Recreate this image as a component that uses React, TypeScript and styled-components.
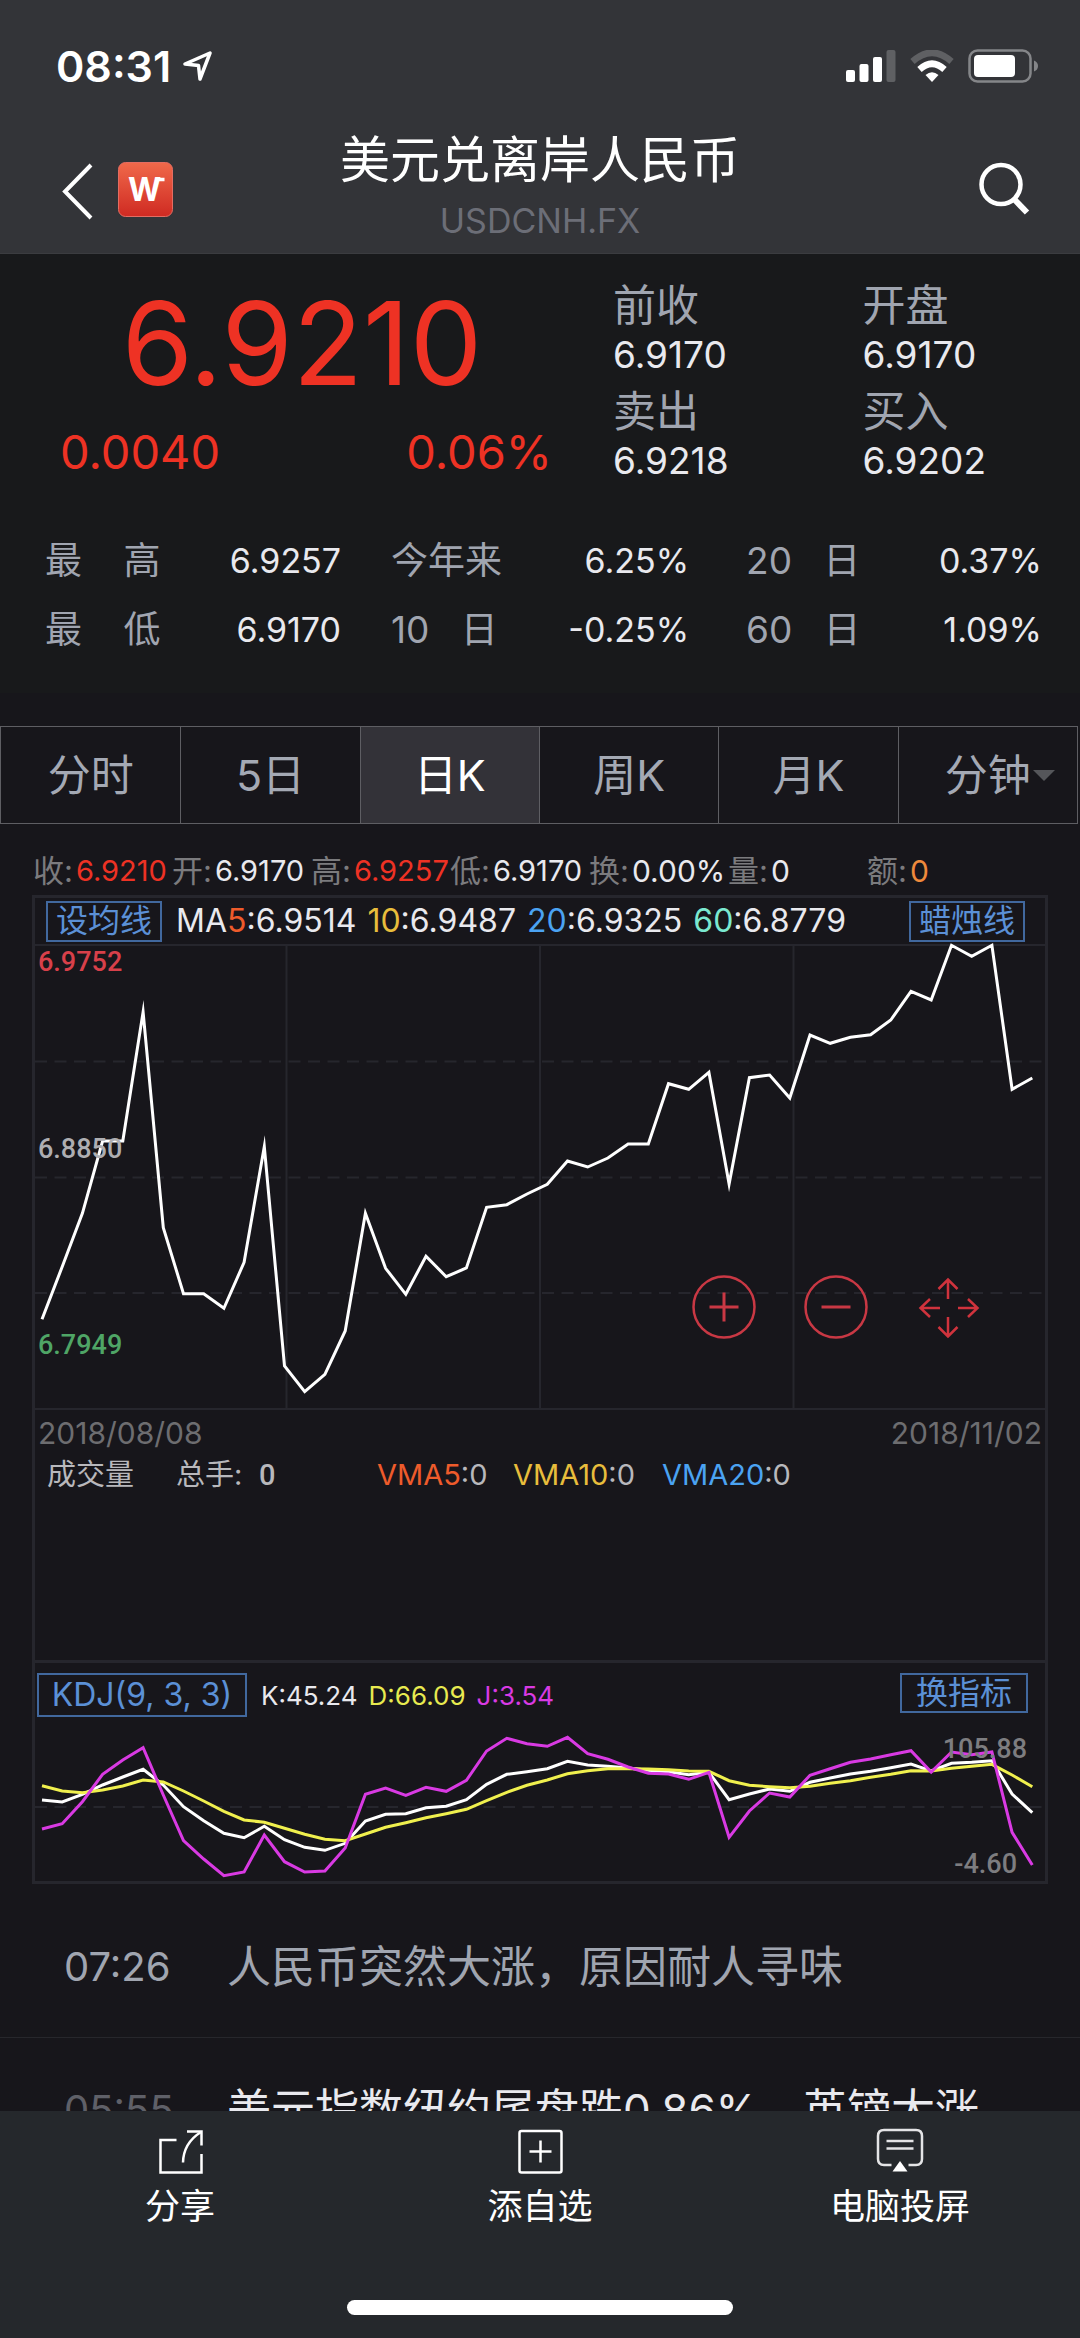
import React from "react";
import styled, { createGlobalStyle } from "styled-components";

const GlobalStyle = createGlobalStyle`
  *, *::before, *::after { box-sizing: border-box; }
  body {
    margin: 0;
    background: #17161b;
    font-family: Inter, "Noto Sans CJK SC", sans-serif;
    color: #e9e9ee;
  }
  h1, p, dl, dd, dt, ul { margin: 0; padding: 0; font-weight: 400; }
  ul { list-style: none; }
  button { margin: 0; padding: 0; border: 0; background: none; font: inherit; color: inherit; cursor: pointer; }
  a { color: inherit; text-decoration: none; }
  svg { display: block; flex: none; }
`;

const BLUE = "#5b90d6";
const RED = "#ee3224";
const LINE = "#26262d";

/* ---------- shell ---------- */

const Screen = styled.div`
  display: flex;
  flex-direction: column;
  height: 100vh;
  overflow: hidden;
`;

const Content = styled.main`
  flex: 1;
  min-height: 0;
  overflow: hidden;
`;

/* ---------- header ---------- */

const Header = styled.header`
  background: #333438;
  border-bottom: 1px solid #3b3c40;
`;

const StatusBar = styled.div`
  display: flex;
  align-items: center;
  justify-content: space-between;
  height: 110px;
  padding: 22px 40px 0 56px;
`;

const Clock = styled.div`
  display: flex;
  align-items: center;
  gap: 12px;
  font-size: 43px;
  font-weight: 600;
  line-height: 52px;
  color: #fff;
`;

const StatusIcons = styled.div`
  display: flex;
  align-items: center;
  gap: 14px;
`;

const TitleBar = styled.div`
  display: grid;
  grid-template-columns: 1fr auto 1fr;
  align-items: center;
  height: 143px;
  padding: 16px 48px 0;
`;

const HeaderLeft = styled.div`
  display: flex;
  align-items: center;
  gap: 22px;
  padding-left: 12px;
`;

const HeaderRight = styled.div`
  display: flex;
  justify-content: flex-end;
`;

const Titles = styled.div`
  text-align: center;
`;

const Title = styled.h1`
  font-size: 50px;
  line-height: 62px;
  color: #fff;
`;

const Symbol = styled.p`
  font-size: 34px;
  line-height: 60px;
  color: #6c6e77;
`;

/* ---------- quote ---------- */

const Quote = styled.section`
  height: 439px;
  padding-top: 24px;
  background: #18191b;
`;

const QuoteTop = styled.div`
  display: grid;
  grid-template-columns: 552fr 528fr;
`;

const PriceBlock = styled.div`
  padding-left: 60px;
  color: ${RED};
`;

const Price = styled.p`
  padding-right: 8px;
  font-size: 115px;
  line-height: 132px;
  text-align: center;
`;

const Changes = styled.div`
  display: flex;
  justify-content: space-between;
  margin-top: 12px;
  font-size: 47px;
  line-height: 60px;
`;

const SideGrid = styled.dl`
  display: grid;
  grid-template-columns: 1fr 1fr;
  column-gap: 32px;
  row-gap: 6px;
  padding-left: 61px;
`;

const SideLabel = styled.dt`
  font-size: 43px;
  line-height: 54px;
  color: #a0a5b0;
`;

const SideValue = styled.dd`
  font-size: 37px;
  line-height: 46px;
`;

const Stats = styled.dl`
  display: grid;
  grid-template-columns: 345fr 354fr 295fr;
  row-gap: 21px;
  margin-top: 53px;
  padding: 0 38px 0 45px;
`;

const Stat = styled.div<{ $gap: number }>`
  display: flex;
  justify-content: space-between;
  align-items: center;
  padding-right: ${(p) => p.$gap}px;
  line-height: 48px;
`;

const StatLabel = styled.dt`
  font-size: 37px;
  color: #a0a5b0;
  white-space: pre;
`;

const StatValue = styled.dd`
  font-size: 34px;
`;

/* ---------- period tabs ---------- */

const Tabs = styled.div`
  display: grid;
  grid-template-columns: repeat(6, 1fr);
  margin: 33px 2px 0 0;
  border: 1px solid #5e5e63;
`;

const Tab = styled.button<{ $active: boolean }>`
  position: relative;
  height: 96px;
  font-size: 43px;
  line-height: 56px;
  color: ${(p) => (p.$active ? "#fff" : "#a4a9b4")};
  background: ${(p) => (p.$active ? "#333238" : "transparent")};

  & + & {
    border-left: 1px solid #5e5e63;
  }
`;

const Caret = styled.span`
  position: absolute;
  right: 22px;
  top: 43px;
  border: 11px solid transparent;
  border-top-color: #55565a;
  border-bottom: 0;
`;

/* ---------- chart ---------- */

const Ohlc = styled.dl`
  display: grid;
  grid-template-columns: repeat(7, 139fr) 74fr;
  padding: 23px 0 0 33px;
  line-height: 48px;
`;

const OhlcItem = styled.div`
  display: flex;
  align-items: center;
  gap: 3px;
  white-space: nowrap;
`;

const OhlcLabel = styled.dt`
  font-size: 31px;
  color: #7b7b7e;
`;

const OhlcValue = styled.dd<{ $color: string; $size: number }>`
  font-size: ${(p) => p.$size}px;
  color: ${(p) => p.$color};
`;

const ChartBox = styled.section`
  margin: 0 32px;
  border: 3px solid ${LINE};
`;

const MaRow = styled.div`
  display: flex;
  align-items: center;
  height: 48px;
  padding: 0 20px 0 11px;
  border-bottom: 2px solid ${LINE};
`;

const Outline = styled.button<{ $width: number; $height: number }>`
  width: ${(p) => p.$width}px;
  height: ${(p) => p.$height}px;
  border: 2px solid #41689e;
  font-size: 32px;
  line-height: 36px;
  color: ${BLUE};
  white-space: nowrap;
`;

const MaList = styled.p`
  flex: 1;
  display: flex;
  gap: 11px;
  padding-left: 14px;
  font-size: 32px;
  line-height: 44px;
`;

const Tint = styled.span<{ $color: string }>`
  color: ${(p) => p.$color};
`;

const Plot = styled.div`
  position: relative;
  height: 464px;
  border-bottom: 2px solid ${LINE};
`;

const Canvas = styled.svg`
  width: 100%;
  height: 100%;
  overflow: visible;
`;

const AxisLabel = styled.span<{ $top: number; $color: string }>`
  position: absolute;
  left: 3px;
  top: ${(p) => p.$top}px;
  font-family: Roboto, sans-serif;
  font-size: 27px;
  font-weight: 500;
  line-height: 32px;
  color: ${(p) => p.$color};
`;

const PlotTools = styled.div`
  position: absolute;
  right: 65px;
  top: 329px;
  display: flex;
  gap: 48px;
`;

const Volume = styled.div`
  height: 253px;
  border-bottom: 3px solid ${LINE};
`;

const Dates = styled.div`
  display: flex;
  justify-content: space-between;
  padding: 0 3px;
  font-size: 30px;
  line-height: 46px;
  color: #6d6d70;
`;

const VolumeRow = styled.div`
  display: grid;
  grid-template-columns: 129px 83px 118px 136px 149px 1fr;
  padding-left: 12px;
  font-size: 29px;
  line-height: 38px;
  color: #b8b8bc;
  white-space: nowrap;
`;

const VolumeCount = styled.span`
  font-family: Roboto, sans-serif;
  font-weight: 500;
`;

const Kdj = styled.div`
  position: relative;
  height: 218px;
`;

const KdjHead = styled.div`
  position: absolute;
  left: 2px;
  right: 17px;
  top: 10px;
  display: flex;
  align-items: flex-start;
`;

const KdjValues = styled.p`
  flex: 1;
  display: flex;
  gap: 11px;
  padding-left: 14px;
  font-size: 26px;
  line-height: 46px;
`;

const KdjAxis = styled.span<{ $top: number; $right: number }>`
  position: absolute;
  right: ${(p) => p.$right}px;
  top: ${(p) => p.$top}px;
  font-family: Roboto, sans-serif;
  font-size: 27px;
  font-weight: 500;
  line-height: 32px;
  color: #7d7d80;
`;

/* ---------- news ---------- */

const News = styled.ul`
  margin-top: 11px;
`;

const NewsItem = styled.li`
  border-bottom: 1px solid #27272c;
`;

const NewsLink = styled.a<{ $read: boolean }>`
  display: grid;
  grid-template-columns: 163px 1fr;
  padding: 42px 0 40px 64px;
  font-size: 44px;
  line-height: 60px;
  color: ${(p) => (p.$read ? "#a0a5b0" : "#e9e9ee")};
  white-space: nowrap;
`;

const NewsTime = styled.time<{ $read: boolean }>`
  font-size: 40px;
  color: ${(p) => (p.$read ? "#a0a5b0" : "#5f6068")};
`;

/* ---------- bottom bar ---------- */

const BottomBar = styled.footer`
  display: flex;
  flex-direction: column;
  align-items: center;
  justify-content: space-between;
  height: 227px;
  padding: 17px 0 23px;
  background: #25282c;
`;

const Actions = styled.nav`
  display: grid;
  grid-template-columns: repeat(3, 1fr);
  width: 100%;
`;

const Action = styled.button`
  display: flex;
  flex-direction: column;
  align-items: center;
  gap: 10px;
  font-size: 35px;
  line-height: 44px;
  color: #fff;
`;

const HomeIndicator = styled.div`
  width: 386px;
  max-width: 60%;
  height: 15px;
  border-radius: 8px;
  background: #fff;
`;

/* ---------- data ---------- */

const SIDE = [
  ["前收", "6.9170"],
  ["开盘", "6.9170"],
  ["卖出", "6.9218"],
  ["买入", "6.9202"],
];

const STATS = [
  ["最    高", "6.9257"],
  ["今年来", "6.25%"],
  ["20   日", "0.37%"],
  ["最    低", "6.9170"],
  ["10   日", "-0.25%"],
  ["60   日", "1.09%"],
];
const STAT_GAPS = [50, 57, 0];

const PERIODS = ["分时", "5日", "日K", "周K", "月K", "分钟"];

const OHLC = [
  { label: "收", value: "6.9210", color: RED, size: 29 },
  { label: "开", value: "6.9170", color: "#e9e9ee", size: 29 },
  { label: "高", value: "6.9257", color: RED, size: 29 },
  { label: "低", value: "6.9170", color: "#e9e9ee", size: 29 },
  { label: "换", value: "0.00%", color: "#e9e9ee", size: 30 },
  { label: "量", value: "0", color: "#e9e9ee", size: 30 },
  { label: "额", value: "0", color: "#ef8a3c", size: 30 },
];

const MA = [
  { prefix: "MA", days: "5", value: "6.9514", color: "#ee5b2b" },
  { prefix: "", days: "10", value: "6.9487", color: "#e8bd3c" },
  { prefix: "", days: "20", value: "6.9325", color: "#4ba3f2" },
  { prefix: "", days: "60", value: "6.8779", color: "#7be8d0" },
];

// Depth below the top of each series' own scale, in thirds of a unit.
const PRICE = [
  1168, 1010, 850, 633, 633, 246, 893, 1091, 1091, 1135, 997, 650, 1308, 1385, 1333, 1203, 850,
  1015, 1093, 979, 1040, 1014, 832, 824, 792, 763, 693, 711, 684, 642, 642, 461, 478, 427, 762,
  443, 435, 504, 315, 340, 322, 314, 270, 184, 210, 46, 79, 46, 478, 444,
];
const K = [
  1230, 1236, 1213, 1185, 1161, 1138, 1185, 1250, 1292, 1330, 1343, 1309, 1349, 1372, 1381, 1360,
  1293, 1273, 1271, 1253, 1249, 1229, 1183, 1153, 1145, 1136, 1114, 1125, 1129, 1134, 1141, 1145,
  1154, 1147, 1229, 1212, 1197, 1204, 1177, 1164, 1152, 1144, 1133, 1122, 1143, 1120, 1117, 1112,
  1212, 1268,
];
const D = [
  1187, 1203, 1208, 1200, 1188, 1170, 1176, 1203, 1233, 1264, 1290, 1297, 1315, 1333, 1348, 1352,
  1332, 1312, 1298, 1283, 1271, 1258, 1232, 1207, 1186, 1170, 1151, 1142, 1136, 1136, 1137, 1139,
  1143, 1144, 1172, 1186, 1190, 1193, 1189, 1180, 1172, 1162, 1153, 1142, 1143, 1135, 1129, 1123,
  1155, 1190,
];
const J = [
  1317, 1301, 1235, 1153, 1110, 1073, 1215, 1352, 1407, 1457, 1446, 1335, 1415, 1446, 1443, 1374,
  1213, 1194, 1216, 1192, 1204, 1171, 1083, 1045, 1061, 1069, 1042, 1091, 1108, 1131, 1150, 1152,
  1168, 1147, 1342, 1263, 1209, 1221, 1156, 1136, 1117, 1107, 1094, 1082, 1146, 1086, 1094, 1086,
  1327, 1425,
];

const toPoints = (series: number[], offset: number) =>
  series.map((v, i) => `${(7 + i * 20.21).toFixed(1)},${(v / 3 - offset).toFixed(1)}`).join(" ");

const NEWS = [
  { time: "07:26", title: "人民币突然大涨，原因耐人寻味", read: true },
  { time: "05:55", title: "美元指数纽约尾盘跌0.86%，英镑大涨", read: false },
];

/* ---------- icons ---------- */

const LocationIcon = () => (
  <svg width="30" height="30" viewBox="0 0 30 30" fill="none" stroke="#fff" strokeWidth="3.500" strokeLinejoin="round">
    <path d="M27 2 17 28 15.500 14.500 2 13Z" />
  </svg>
);

const SignalIcon = () => (
  <svg width="50" height="32" viewBox="0 0 50 32" fill="#fff">
    <rect x="0" y="20" width="9" height="12" rx="2" />
    <rect x="13.500" y="14" width="9" height="18" rx="2" />
    <rect x="27" y="7" width="9" height="25" rx="2" />
    <rect x="40.500" y="0" width="9" height="32" rx="2" fill="#5f6063" />
  </svg>
);

const WifiIcon = () => (
  <svg width="44" height="32" viewBox="0 0 44 32" fill="none">
    <path d="M2.500 11.500Q22-6 41.500 11.500" stroke="#5f6063" strokeWidth="6.500" />
    <path d="M9.500 19.500Q22 8 34.500 19.500" stroke="#fff" strokeWidth="6.500" />
    <path d="M22 32 15.500 25Q22 19.500 28.500 25Z" fill="#fff" />
  </svg>
);

const BatteryIcon = () => (
  <svg width="72" height="34" viewBox="0 0 72 34" fill="none">
    <rect x="1.500" y="1.500" width="61" height="31" rx="8" stroke="#858689" strokeWidth="2.500" />
    <rect x="6" y="6" width="41" height="22" rx="4" fill="#fff" />
    <path d="M66 11.500Q70 13 70 17T66 22.500Z" fill="#858689" />
  </svg>
);

const BackIcon = () => (
  <svg width="36" height="60" viewBox="0 0 36 60" fill="none" stroke="#fff" strokeWidth="4">
    <path d="M31 5 5 31.500 31 58" />
  </svg>
);

const AppLogo = () => (
  <svg width="55" height="55" viewBox="0 0 55 55" role="img" aria-label="Wind">
    <defs>
      <linearGradient id="logo" x1="0" y1="0" x2="0" y2="1">
        <stop offset="0" stopColor="#f0694a" />
        <stop offset="1" stopColor="#cf2a22" />
      </linearGradient>
    </defs>
    <rect x="0.500" y="0.500" width="54" height="54" rx="7" fill="url(#logo)" stroke="#e46c62" />
    <text x="26.500" y="39" textAnchor="middle" fontFamily="Inter, sans-serif" fontWeight="700" fontSize="32" fill="#fff">
      W
    </text>
    <path d="M39.500 15.700H46.500V19.200H40Z" fill="#fff" />
  </svg>
);

const SearchIcon = () => (
  <svg width="54" height="56" viewBox="0 0 54 56" fill="none" stroke="#fff">
    <circle cx="23" cy="22.500" r="19.500" strokeWidth="4.500" />
    <path d="M36 37 49 50.500" strokeWidth="6" />
  </svg>
);

const ZoomIcon = ({ plus }: { plus: boolean }) => (
  <svg width="64" height="64" viewBox="0 0 64 64" fill="none" stroke="#c93844" strokeWidth="3">
    <circle cx="32" cy="32" r="30.500" strokeWidth="2.500" />
    <path d={plus ? "M17.500 32h29M32 17.500v29" : "M17.500 32h29"} />
  </svg>
);

const MoveIcon = () => (
  <svg width="64" height="64" viewBox="0 0 64 64" fill="none" stroke="#d0333d" strokeWidth="2.500">
    <path d="M32 24V5M22.500 14 32 4.500 41.500 14" />
    <path d="M32 42V61M22.500 52 32 61.500 41.500 52" />
    <path d="M24 33H5M14 24 4.500 33 14 42" />
    <path d="M42 33H61M52 24 61.500 33 52 42" />
  </svg>
);

const ShareIcon = () => (
  <svg width="45" height="46" viewBox="0 0 45 46" fill="none" stroke="#fff" strokeWidth="2.500">
    <path d="M18.500 12H2.500V44.500H43.500V26" />
    <path d="M29 3.500H43.500V17.500" />
    <path d="M25 34.500Q25.500 15 43 4" />
  </svg>
);

const AddIcon = () => (
  <svg width="45" height="46" viewBox="0 0 45 46" fill="none" stroke="#fff" strokeWidth="2.500">
    <rect x="1.500" y="3" width="42" height="41.500" rx="2" />
    <path d="M11.500 23.500h22M22.500 12.500v22" />
  </svg>
);

const CastIcon = () => (
  <svg width="48" height="46" viewBox="0 0 48 46" fill="none" stroke="#e4e4e6" strokeWidth="2.500">
    <path d="M15.500 37H8Q2 37 2 31V8Q2 2 8 2H40Q46 2 46 8V31Q46 37 40 37H32.500" />
    <path d="M10.500 13h27M10.500 20.500h27" />
    <path d="M24 33 31.500 43.500H16.500Z" fill="#fff" stroke="none" />
  </svg>
);

/* ---------- page ---------- */

export default function App() {
  return (
    <Screen>
      <GlobalStyle />
      <Header>
        <StatusBar>
          <Clock>
            08:31
            <LocationIcon />
          </Clock>
          <StatusIcons>
            <SignalIcon />
            <WifiIcon />
            <BatteryIcon />
          </StatusIcons>
        </StatusBar>
        <TitleBar>
          <HeaderLeft>
            <button type="button" aria-label="返回">
              <BackIcon />
            </button>
            <AppLogo />
          </HeaderLeft>
          <Titles>
            <Title>美元兑离岸人民币</Title>
            <Symbol>USDCNH.FX</Symbol>
          </Titles>
          <HeaderRight>
            <button type="button" aria-label="搜索">
              <SearchIcon />
            </button>
          </HeaderRight>
        </TitleBar>
      </Header>

      <Content>
        <Quote>
          <QuoteTop>
            <PriceBlock>
              <Price>6.9210</Price>
              <Changes>
                <span>0.0040</span>
                <span>0.06%</span>
              </Changes>
            </PriceBlock>
            <SideGrid>
              {SIDE.map(([label, value]) => (
                <div key={label}>
                  <SideLabel>{label}</SideLabel>
                  <SideValue>{value}</SideValue>
                </div>
              ))}
            </SideGrid>
          </QuoteTop>
          <Stats>
            {STATS.map(([label, value], i) => (
              <Stat key={label} $gap={STAT_GAPS[i % 3]}>
                <StatLabel>{label}</StatLabel>
                <StatValue>{value}</StatValue>
              </Stat>
            ))}
          </Stats>
        </Quote>

        <Tabs role="tablist">
          {PERIODS.map((name) => (
            <Tab key={name} type="button" role="tab" aria-selected={name === "日K"} $active={name === "日K"}>
              {name}
              {name === "分钟" && <Caret />}
            </Tab>
          ))}
        </Tabs>

        <Ohlc>
          {OHLC.map((o) => (
            <OhlcItem key={o.label}>
              <OhlcLabel>{o.label}:</OhlcLabel>
              <OhlcValue $color={o.color} $size={o.size}>
                {o.value}
              </OhlcValue>
            </OhlcItem>
          ))}
        </Ohlc>

        <ChartBox>
          <MaRow>
            <Outline type="button" $width={116} $height={41}>
              设均线
            </Outline>
            <MaList>
              {MA.map((m) => (
                <span key={m.days}>
                  {m.prefix}
                  <Tint $color={m.color}>{m.days}</Tint>:{m.value}
                </span>
              ))}
            </MaList>
            <Outline type="button" $width={116} $height={41}>
              蜡烛线
            </Outline>
          </MaRow>

          <Plot>
            <Canvas viewBox="0 0 1010 462" preserveAspectRatio="none" fill="none">
              <g stroke={LINE} strokeWidth="2">
                <path d="M0 115.500H1010M0 231.500H1010M0 347H1010" strokeDasharray="12 7.500" />
                <path d="M251.500 0V462M505 0V462M758.500 0V462" />
              </g>
              <polyline points={toPoints(PRICE, 16)} stroke="#fff" strokeWidth="3" strokeMiterlimit="20" />
            </Canvas>
            <AxisLabel $top={0} $color="#d8404a">6.9752</AxisLabel>
            <AxisLabel $top={187} $color="#aeaeb2">6.8850</AxisLabel>
            <AxisLabel $top={383} $color="#4fa566">6.7949</AxisLabel>
            <PlotTools>
              <button type="button" aria-label="放大">
                <ZoomIcon plus />
              </button>
              <button type="button" aria-label="缩小">
                <ZoomIcon plus={false} />
              </button>
              <button type="button" aria-label="移动">
                <MoveIcon />
              </button>
            </PlotTools>
          </Plot>

          <Volume>
            <Dates>
              <span>2018/08/08</span>
              <span>2018/11/02</span>
            </Dates>
            <VolumeRow>
              <span>成交量</span>
              <span>总手:</span>
              <VolumeCount>0</VolumeCount>
              <span>
                <Tint $color="#ee5b2b">VMA5</Tint>:0
              </span>
              <span>
                <Tint $color="#e8bd3c">VMA10</Tint>:0
              </span>
              <span>
                <Tint $color="#4ba3f2">VMA20</Tint>:0
              </span>
            </VolumeRow>
          </Volume>

          <Kdj>
            <Canvas viewBox="0 0 1010 218" preserveAspectRatio="none" fill="none" strokeWidth="3">
              <path d="M0 144H1010" stroke={LINE} strokeWidth="2" strokeDasharray="12 7.500" />
              <polyline points={toPoints(K, 273)} stroke="#fff" />
              <polyline points={toPoints(D, 273)} stroke="#f0f04e" />
              <polyline points={toPoints(J, 273)} stroke="#d93ae3" />
            </Canvas>
            <KdjHead>
              <Outline type="button" $width={210} $height={44}>
                KDJ(9, 3, 3)
              </Outline>
              <KdjValues>
                <span>K:45.24</span>
                <Tint $color="#e8ea50">D:66.09</Tint>
                <Tint $color="#d93ae3">J:3.54</Tint>
              </KdjValues>
              <Outline type="button" $width={128} $height={40}>
                换指标
              </Outline>
            </KdjHead>
            <KdjAxis $top={70} $right={18}>105.88</KdjAxis>
            <KdjAxis $top={185} $right={28}>-4.60</KdjAxis>
          </Kdj>
        </ChartBox>

        <News>
          {NEWS.map((n) => (
            <NewsItem key={n.time}>
              <NewsLink href="#" $read={n.read}>
                <NewsTime $read={n.read}>{n.time}</NewsTime>
                <span>{n.title}</span>
              </NewsLink>
            </NewsItem>
          ))}
        </News>
      </Content>

      <BottomBar>
        <Actions>
          <Action type="button">
            <ShareIcon />
            分享
          </Action>
          <Action type="button">
            <AddIcon />
            添自选
          </Action>
          <Action type="button">
            <CastIcon />
            电脑投屏
          </Action>
        </Actions>
        <HomeIndicator />
      </BottomBar>
    </Screen>
  );
}
